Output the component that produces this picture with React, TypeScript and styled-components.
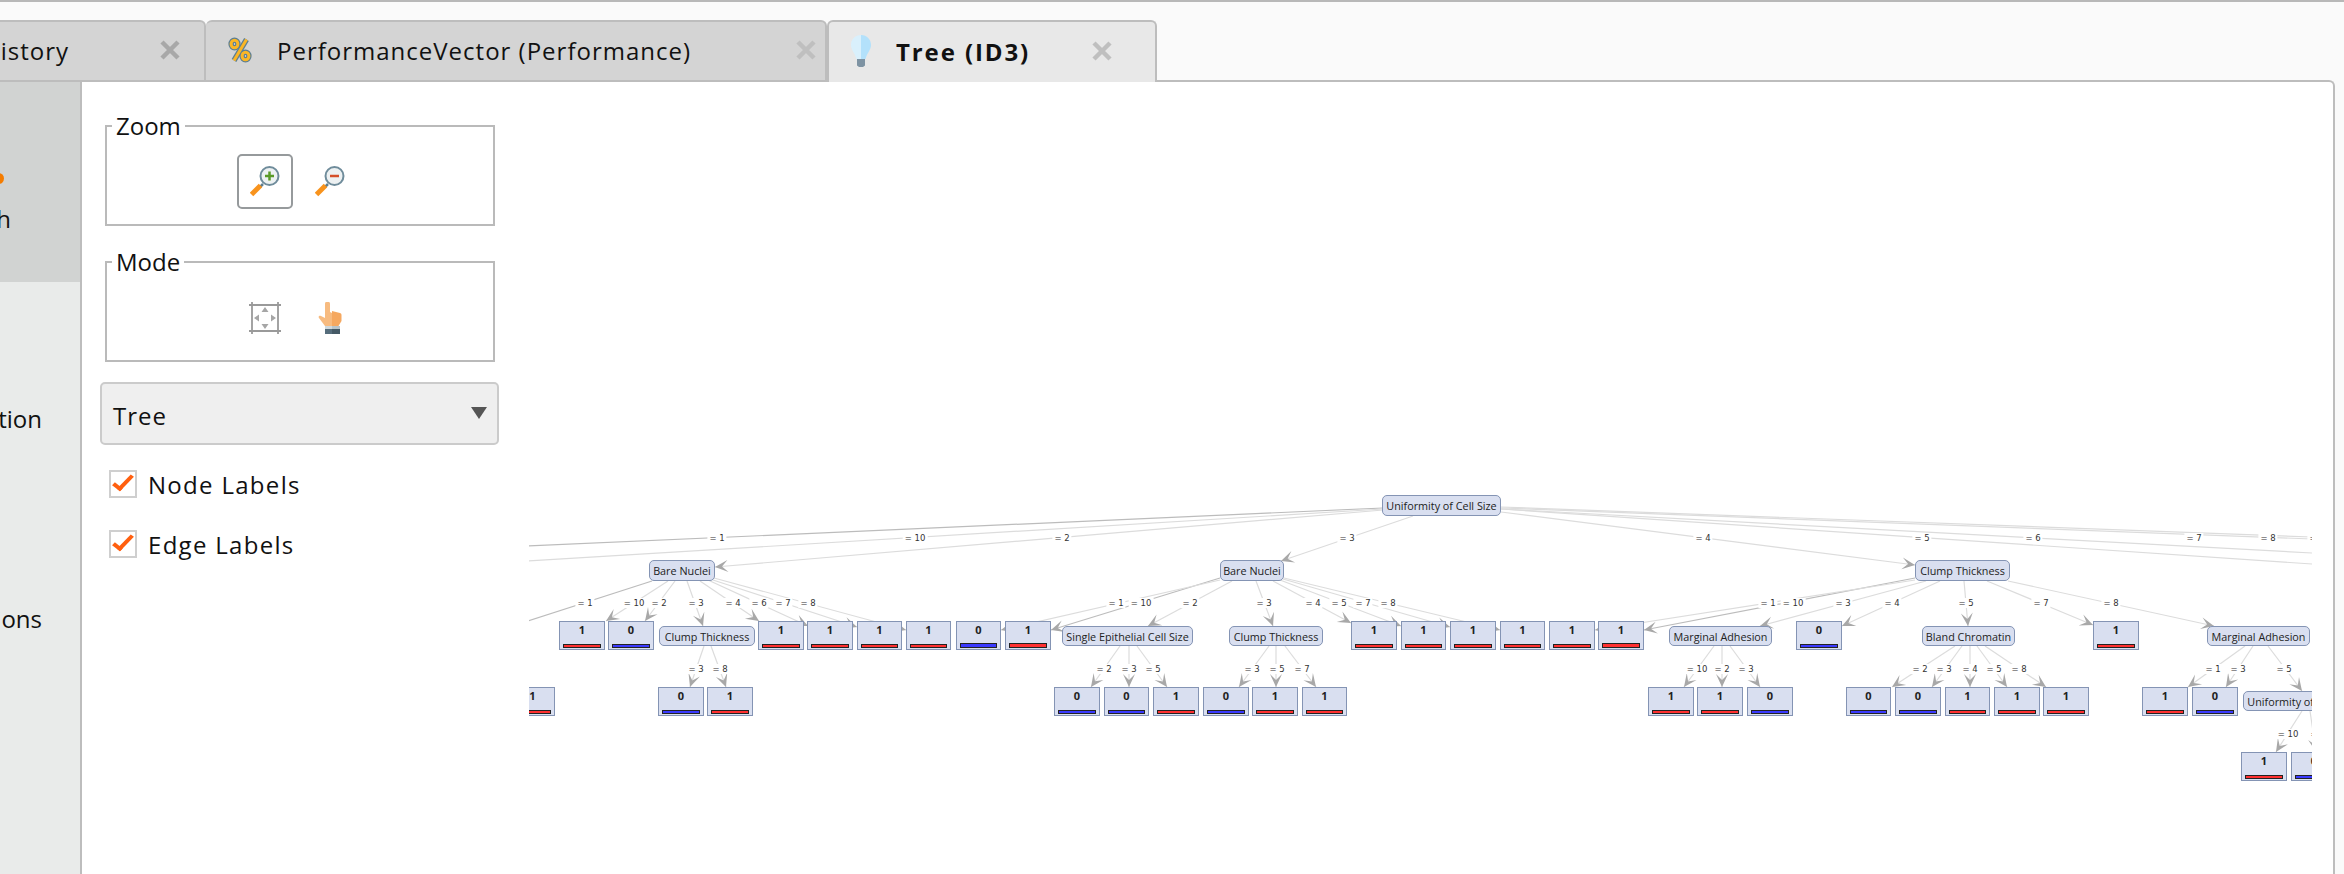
import styled, { createGlobalStyle } from "styled-components";

const GlobalStyle = createGlobalStyle`
  html, body {
    margin: 0;
    height: 100%;
    overflow: hidden;
    background: #fafafa;
    color: #111;
    font-family: "Open Sans", "Noto Sans", sans-serif;
  }
  #root { height: 100%; }
`;

// canvas origin in page coordinates
const OX = 529;
const OY = 82;

type Inner = { text: string; x0: number; x1: number; y0: number; y1: number };
type Leaf = { v: 0 | 1; x0: number; x1: number; y0: number; thick?: boolean };
type Edge = { x1: number; y1: number; x2: number; y2: number; dark?: boolean; noHead?: boolean };
type Label = { t: string; x: number; y: number };

const inners: Inner[] = [
  { text: "Uniformity of Cell Size", x0: 1382, x1: 1501, y0: 495, y1: 516 },
  { text: "Bare Nuclei", x0: 649, x1: 715, y0: 560, y1: 581 },
  { text: "Bare Nuclei", x0: 1220, x1: 1284, y0: 560, y1: 581 },
  { text: "Clump Thickness", x0: 1915, x1: 2010, y0: 560, y1: 581 },
  { text: "Clump Thickness", x0: 659, x1: 755, y0: 626, y1: 646 },
  { text: "Single Epithelial Cell Size", x0: 1062, x1: 1193, y0: 626, y1: 646 },
  { text: "Clump Thickness", x0: 1229, x1: 1323, y0: 626, y1: 646 },
  { text: "Marginal Adhesion", x0: 1669, x1: 1772, y0: 626, y1: 646 },
  { text: "Bland Chromatin", x0: 1922, x1: 2015, y0: 626, y1: 646 },
  { text: "Marginal Adhesion", x0: 2207, x1: 2310, y0: 626, y1: 646 },
  { text: "Uniformity of Cell Size", x0: 2243, x1: 2362, y0: 691, y1: 711 },
];

const L2 = 621;
const L3 = 687;
const L4 = 752;

const leaves: Leaf[] = [
  { v: 1, x0: 559, x1: 605, y0: L2 },
  { v: 0, x0: 608, x1: 654, y0: L2 },
  { v: 1, x0: 758, x1: 804, y0: L2 },
  { v: 1, x0: 807, x1: 853, y0: L2 },
  { v: 1, x0: 857, x1: 902, y0: L2 },
  { v: 1, x0: 906, x1: 951, y0: L2 },
  { v: 0, x0: 956, x1: 1001, y0: L2, thick: true },
  { v: 1, x0: 1005, x1: 1051, y0: L2, thick: true },
  { v: 1, x0: 1351, x1: 1397, y0: L2 },
  { v: 1, x0: 1401, x1: 1446, y0: L2 },
  { v: 1, x0: 1450, x1: 1496, y0: L2 },
  { v: 1, x0: 1500, x1: 1545, y0: L2 },
  { v: 1, x0: 1549, x1: 1595, y0: L2 },
  { v: 1, x0: 1598, x1: 1644, y0: L2, thick: true },
  { v: 0, x0: 1796, x1: 1842, y0: L2 },
  { v: 1, x0: 2093, x1: 2139, y0: L2 },
  { v: 1, x0: 510, x1: 555, y0: L3 },
  { v: 0, x0: 658, x1: 704, y0: L3 },
  { v: 1, x0: 707, x1: 753, y0: L3 },
  { v: 0, x0: 1054, x1: 1100, y0: L3 },
  { v: 0, x0: 1104, x1: 1149, y0: L3 },
  { v: 1, x0: 1153, x1: 1199, y0: L3 },
  { v: 0, x0: 1203, x1: 1249, y0: L3 },
  { v: 1, x0: 1252, x1: 1298, y0: L3 },
  { v: 1, x0: 1302, x1: 1347, y0: L3 },
  { v: 1, x0: 1648, x1: 1694, y0: L3 },
  { v: 1, x0: 1697, x1: 1743, y0: L3 },
  { v: 0, x0: 1747, x1: 1793, y0: L3 },
  { v: 0, x0: 1846, x1: 1891, y0: L3 },
  { v: 0, x0: 1895, x1: 1941, y0: L3 },
  { v: 1, x0: 1945, x1: 1990, y0: L3 },
  { v: 1, x0: 1994, x1: 2040, y0: L3 },
  { v: 1, x0: 2043, x1: 2089, y0: L3 },
  { v: 1, x0: 2142, x1: 2188, y0: L3 },
  { v: 0, x0: 2192, x1: 2238, y0: L3 },
  { v: 1, x0: 2241, x1: 2287, y0: L4 },
  { v: 0, x0: 2291, x1: 2337, y0: L4 },
];

const edges: Edge[] = [
  { x1: 1383, y1: 508, x2: 528, y2: 546, dark: true, noHead: true },
  { x1: 1383, y1: 509, x2: 528, y2: 561, noHead: true },
  { x1: 1383, y1: 510, x2: 715, y2: 567 },
  { x1: 1413, y1: 516, x2: 1281, y2: 561 },
  { x1: 1501, y1: 512, x2: 1915, y2: 565 },
  { x1: 1501, y1: 509, x2: 2312, y2: 564, noHead: true },
  { x1: 1501, y1: 509, x2: 2312, y2: 553, noHead: true },
  { x1: 1501, y1: 508, x2: 2312, y2: 539, noHead: true },
  { x1: 1501, y1: 507, x2: 2312, y2: 537, noHead: true },
  // first Bare Nuclei
  { x1: 652, y1: 581, x2: 528, y2: 621, dark: true, noHead: true },
  { x1: 668, y1: 581, x2: 606, y2: 621 },
  { x1: 675, y1: 581, x2: 645, y2: 621 },
  { x1: 687, y1: 581, x2: 703, y2: 626 },
  { x1: 700, y1: 581, x2: 759, y2: 621 },
  { x1: 708, y1: 580, x2: 808, y2: 626 },
  { x1: 713, y1: 580, x2: 857, y2: 627 },
  { x1: 714, y1: 578, x2: 906, y2: 630 },
  { x1: 704, y1: 646, x2: 690, y2: 687 },
  { x1: 711, y1: 646, x2: 726, y2: 687 },
  // second Bare Nuclei
  { x1: 1220, y1: 578, x2: 1051, y2: 630, dark: true },
  { x1: 1220, y1: 580, x2: 1001, y2: 630 },
  { x1: 1232, y1: 581, x2: 1148, y2: 626 },
  { x1: 1256, y1: 581, x2: 1273, y2: 626 },
  { x1: 1273, y1: 581, x2: 1351, y2: 623 },
  { x1: 1280, y1: 580, x2: 1401, y2: 626 },
  { x1: 1283, y1: 579, x2: 1450, y2: 627 },
  { x1: 1284, y1: 578, x2: 1500, y2: 630 },
  { x1: 1120, y1: 646, x2: 1091, y2: 687 },
  { x1: 1129, y1: 646, x2: 1129, y2: 687 },
  { x1: 1137, y1: 646, x2: 1167, y2: 687 },
  { x1: 1269, y1: 646, x2: 1239, y2: 687 },
  { x1: 1276, y1: 646, x2: 1276, y2: 687 },
  { x1: 1285, y1: 646, x2: 1316, y2: 687 },
  // first-level Clump Thickness
  { x1: 1915, y1: 578, x2: 1644, y2: 630, dark: true },
  { x1: 1915, y1: 580, x2: 1595, y2: 630 },
  { x1: 1926, y1: 581, x2: 1760, y2: 626 },
  { x1: 1940, y1: 581, x2: 1842, y2: 626 },
  { x1: 1964, y1: 581, x2: 1968, y2: 626 },
  { x1: 1987, y1: 581, x2: 2093, y2: 625 },
  { x1: 2008, y1: 581, x2: 2214, y2: 626 },
  { x1: 1714, y1: 646, x2: 1684, y2: 687 },
  { x1: 1722, y1: 646, x2: 1722, y2: 687 },
  { x1: 1730, y1: 646, x2: 1760, y2: 687 },
  { x1: 1955, y1: 646, x2: 1892, y2: 687 },
  { x1: 1962, y1: 646, x2: 1932, y2: 687 },
  { x1: 1970, y1: 646, x2: 1970, y2: 687 },
  { x1: 1977, y1: 646, x2: 2007, y2: 687 },
  { x1: 1985, y1: 646, x2: 2046, y2: 687 },
  { x1: 2245, y1: 646, x2: 2188, y2: 687 },
  { x1: 2253, y1: 646, x2: 2226, y2: 687 },
  { x1: 2268, y1: 646, x2: 2302, y2: 691 },
  { x1: 2302, y1: 711, x2: 2276, y2: 752 },
  { x1: 2310, y1: 711, x2: 2316, y2: 752 },
];

const row = (y: number, items: [string, number][]): Label[] =>
  items.map(([t, x]) => ({ t: `= ${t}`, x, y }));

const labels: Label[] = [
  ...row(538, [["1", 717], ["10", 915], ["2", 1062], ["3", 1347], ["4", 1703], ["5", 1922], ["6", 2033], ["7", 2194], ["8", 2268], ["9", 2317]]),
  ...row(603, [
    ["1", 585], ["10", 634], ["2", 659], ["3", 696], ["4", 733], ["6", 759], ["7", 783], ["8", 808],
    ["1", 1116], ["10", 1141], ["2", 1190], ["3", 1264], ["4", 1313], ["5", 1339], ["7", 1363], ["8", 1388],
    ["1", 1768], ["10", 1793], ["3", 1843], ["4", 1892], ["5", 1966], ["7", 2041], ["8", 2111],
  ]),
  ...row(669, [
    ["3", 696], ["8", 720], ["2", 1104], ["3", 1129], ["5", 1153], ["3", 1252], ["5", 1277], ["7", 1302],
    ["10", 1697], ["2", 1722], ["3", 1746], ["2", 1920], ["3", 1944], ["4", 1970], ["5", 1994], ["8", 2019],
    ["1", 2213], ["3", 2238], ["5", 2284],
  ]),
  ...row(734, [["10", 2288], ["2", 2318]]),
];

function arrowHead(e: Edge) {
  const a = Math.atan2(e.y2 - e.y1, e.x2 - e.x1);
  const pt = (len: number, side: number) => {
    const x = e.x2 - OX - Math.cos(a) * len - Math.sin(a) * side;
    const y = e.y2 - OY - Math.sin(a) * len + Math.cos(a) * side;
    return `${x.toFixed(1)},${y.toFixed(1)}`;
  };
  return [pt(0, 0), pt(13, 6), pt(7, 0), pt(13, -6)].join(" ");
}

function CloseIcon({ color }: { color: string }) {
  return (
    <CloseGlyph viewBox="0 0 20 20">
      <path d="M2 2 18 18M18 2 2 18" stroke={color} strokeWidth="4.5" fill="none" />
    </CloseGlyph>
  );
}

function PercentIcon() {
  return (
    <svg width="24" height="26" viewBox="0 0 24 26">
      <g fill="none" stroke="#5d7f92" strokeWidth="5.4">
        <ellipse cx="6.5" cy="7" rx="3.4" ry="3.8" />
        <ellipse cx="17.5" cy="19" rx="3.4" ry="3.8" />
        <path d="M18.5 2.5 6 23.5" />
      </g>
      <g fill="none" stroke="#fbb625" strokeWidth="3">
        <ellipse cx="6.5" cy="7" rx="3.4" ry="3.8" />
        <ellipse cx="17.5" cy="19" rx="3.4" ry="3.8" />
        <path d="M18.5 2.5 6 23.5" />
      </g>
    </svg>
  );
}

function BulbIcon() {
  return (
    <svg width="20" height="32" viewBox="0 0 20 32">
      <path d="M10 0C4 0 0 4.5 0 10c0 5 4 8 5.5 14H10z" fill="#d9f0fc" />
      <path d="M10 0c6 0 10 4.5 10 10 0 5-4 8-5.500 14H10z" fill="#b3e1fb" />
      <path d="M6 24h8v6.500L12 32H8l-2-1.500z" fill="#7e93a3" />
    </svg>
  );
}

function Magnifier({ minus }: { minus?: boolean }) {
  return (
    <svg width="30" height="32" viewBox="0 0 30 32">
      <path d="M10 21 13 18" stroke="#5f7f90" strokeWidth="2.500" />
      <path d="M1.500 28.500 10.500 19.500" stroke="#f8931d" strokeWidth="5" />
      <circle cx="19.500" cy="10" r="9" fill="#edf1f2" stroke="#6f8c9b" strokeWidth="2" />
      {minus ? (
        <path d="M15 10h9" stroke="#d5502a" strokeWidth="2.500" />
      ) : (
        <path d="M15 10h9M19.500 5.500v9" stroke="#5a9a28" strokeWidth="2.500" />
      )}
    </svg>
  );
}

function SelectionIcon() {
  return (
    <svg width="32" height="32" viewBox="0 0 32 32">
      <path d="M3 0v32M29 0v32M0 3h32M0 29h32" stroke="#9a9a9a" strokeWidth="1.800" />
      <path d="M16 5l3.500 5h-7zM16 27l3.500-5h-7zM5 16l5-3.500v7zM27 16l-5-3.500v7z" fill="#a6a6a6" />
    </svg>
  );
}

function HandIcon() {
  return (
    <svg width="24" height="32" viewBox="0 0 24 32">
      <path d="M7 2a2.500 2.500 0 0 1 5 0v8l2 1v13H7l-6-8c-1-1 0-3 2-2l4 2z" fill="#f7bb80" />
      <path d="M14 9l8 2c1.500 .5 1.500 1 1.500 3v5l-3 5H14z" fill="#f5a860" />
      <path d="M7 24h7v3H7z" fill="#cfd8dc" />
      <path d="M14 24h8v3h-8z" fill="#b8c4ca" />
      <path d="M7 27h7v5H7z" fill="#566d7c" />
      <path d="M14 27h8v5h-8z" fill="#455a66" />
    </svg>
  );
}

export default function App() {
  return (
    <Page>
      <GlobalStyle />
      <TopLine />
      <TabBar>
        <Tab $offset={-89} $width={295} $padRight={24}>
          <TabIconSlot />
          <TabTitle>History</TabTitle>
          <CloseIcon color="#a8a8a8" />
        </Tab>
        <Tab $width={621} $padRight={9}>
          <PercentIcon />
          <TabTitle>PerformanceVector (Performance)</TabTitle>
          <CloseIcon color="#bfbfbf" />
        </Tab>
        <Tab $active $width={330} $padRight={43}>
          <BulbIcon />
          <TabTitle $active>Tree (ID3)</TabTitle>
          <CloseIcon color="#bfbfbf" />
        </Tab>
      </TabBar>
      <Body>
        <Sidebar>
          <SideItem $active $textEnd={11}>
            <SideDot />
            <SideText>Graph</SideText>
          </SideItem>
          <SideItem $textEnd={42}>
            <SideText>Description</SideText>
          </SideItem>
          <SideItem $textEnd={42}>
            <SideText>Annotations</SideText>
          </SideItem>
        </Sidebar>
        <Panel>
          <Controls>
            <Group>
              <GroupLegend>Zoom</GroupLegend>
              <IconRow>
                <IconButton $selected>
                  <Magnifier />
                </IconButton>
                <IconButton>
                  <Magnifier minus />
                </IconButton>
              </IconRow>
            </Group>
            <Group>
              <GroupLegend>Mode</GroupLegend>
              <IconRow>
                <IconButton>
                  <SelectionIcon />
                </IconButton>
                <IconButton>
                  <HandIcon />
                </IconButton>
              </IconRow>
            </Group>
            <Dropdown>
              <span>Tree</span>
              <DropArrow />
            </Dropdown>
            <CheckList>
              <CheckRow>
                <CheckBox>
                  <CheckMark />
                </CheckBox>
                Node Labels
              </CheckRow>
              <CheckRow>
                <CheckBox>
                  <CheckMark />
                </CheckBox>
                Edge Labels
              </CheckRow>
            </CheckList>
          </Controls>
          <Canvas>
            <EdgeLayer>
              {edges.map((e, i) => (
                <g key={i}>
                  <line
                    x1={e.x1 - OX}
                    y1={e.y1 - OY}
                    x2={e.x2 - OX}
                    y2={e.y2 - OY}
                    stroke={e.dark ? "#bcbcbc" : "#dcdcdc"}
                    strokeWidth="1.200"
                  />
                  {!e.noHead && <polygon points={arrowHead(e)} fill="#a8a8a8" />}
                </g>
              ))}
            </EdgeLayer>
            {labels.map((l, i) => (
              <EdgeLabel key={i} style={{ left: l.x - OX, top: l.y - OY }}>
                {l.t}
              </EdgeLabel>
            ))}
            {inners.map((n, i) => (
              <InnerNode
                key={i}
                style={{ left: n.x0 - OX, top: n.y0 - OY, width: n.x1 - n.x0, height: n.y1 - n.y0 }}
              >
                {n.text}
              </InnerNode>
            ))}
            {leaves.map((n, i) => (
              <LeafNode key={i} style={{ left: n.x0 - OX, top: n.y0 - OY, width: n.x1 - n.x0 }}>
                <LeafValue>{n.v}</LeafValue>
                <LeafBar $blue={n.v === 0} $thick={n.thick} />
              </LeafNode>
            ))}
          </Canvas>
        </Panel>
      </Body>
    </Page>
  );
}

const Page = styled.div`
  height: 874px;
  width: 2344px;
  display: flex;
  flex-direction: column;
  overflow: hidden;
`;

const TopLine = styled.div`
  height: 2px;
  background: #b8b8b8;
  margin-bottom: 18px;
  flex: none;
`;

const TabBar = styled.div`
  height: 62px;
  flex: none;
  display: flex;
  width: 2335px;
`;

const Tab = styled.div<{ $active?: boolean; $offset?: number; $width: number; $padRight: number }>`
  box-sizing: border-box;
  position: relative;
  z-index: ${(p) => (p.$active ? 1 : 0)};
  height: 62px;
  flex: none;
  width: ${(p) => p.$width}px;
  margin-left: ${(p) => p.$offset ?? 0}px;
  padding: 0 ${(p) => p.$padRight}px 2px 22px;
  display: flex;
  align-items: center;
  background: ${(p) => (p.$active ? "#e8e8e8" : "#d4d4d4")};
  border: 2px solid #bdbdbd;
  border-left-width: ${(p) => (p.$active ? 2 : 0)}px;
  border-bottom-width: ${(p) => (p.$active ? 0 : 2)}px;
  border-radius: 6px 6px 0 0;
`;

const TabIconSlot = styled.span`
  width: 24px;
  flex: none;
`;

const TabTitle = styled.span<{ $active?: boolean }>`
  margin-left: 25px;
  margin-right: auto;
  font-size: 24px;
  font-weight: ${(p) => (p.$active ? 700 : 400)};
  letter-spacing: ${(p) => (p.$active ? 1.9 : 1)}px;
  white-space: nowrap;
`;

const CloseGlyph = styled.svg`
  width: 20px;
  height: 20px;
  flex: none;
`;

const Body = styled.div`
  flex: 1;
  display: flex;
  width: 2335px;
  min-height: 0;
  margin-top: -2px;
`;

const Sidebar = styled.div`
  width: 82px;
  flex: none;
  box-sizing: border-box;
  background: #e9ebea;
  border-top: 2px solid #bdbdbd;
  border-right: 2px solid #bdbdbd;
  overflow: hidden;
`;

const SideItem = styled.div<{ $active?: boolean; $textEnd: number }>`
  height: 200px;
  width: 80px;
  box-sizing: border-box;
  padding: 0 ${(p) => 80 - p.$textEnd}px 47px 0;
  background: ${(p) => (p.$active ? "#d1d3d2" : "transparent")};
  display: flex;
  flex-direction: column;
  justify-content: flex-end;
  align-items: flex-end;
  position: relative;
`;

const SideDot = styled.span`
  position: absolute;
  left: -7px;
  top: 91px;
  width: 11px;
  height: 11px;
  border-radius: 50%;
  background: #f57c00;
`;

const SideText = styled.span`
  font-size: 24px;
  line-height: 32px;
  white-space: nowrap;
`;

const Panel = styled.div`
  flex: 1;
  min-width: 0;
  display: flex;
  background: #fff;
  border-top: 2px solid #bdbdbd;
  border-right: 2px solid #bdbdbd;
  border-top-right-radius: 6px;
`;

const Controls = styled.div`
  width: 447px;
  flex: none;
  box-sizing: border-box;
  padding: 32px 0 0 18px;
  display: flex;
  flex-direction: column;
  align-items: flex-start;
`;

const Group = styled.fieldset`
  box-sizing: border-box;
  width: 390px;
  height: 112px;
  margin: 0 0 24px 5px;
  padding: 0 4px 0 0;
  border: 2px solid #bababa;
  display: flex;
  justify-content: center;
  align-items: center;
`;

const GroupLegend = styled.legend`
  margin-left: 5px;
  padding: 0 4px;
  font-size: 24px;
  line-height: 24px;
`;

const IconRow = styled.div`
  display: flex;
  gap: 9px;
  margin: 16px 0 0 -1px;
`;

const IconButton = styled.div<{ $selected?: boolean }>`
  box-sizing: border-box;
  width: 56px;
  height: 55px;
  display: flex;
  align-items: center;
  justify-content: center;
  border: 2px solid ${(p) => (p.$selected ? "#969a9c" : "transparent")};
  border-radius: 5px;
`;

const Dropdown = styled.div`
  box-sizing: border-box;
  width: 399px;
  height: 63px;
  margin-top: -4px;
  padding: 4px 10px 0 11px;
  display: flex;
  align-items: center;
  justify-content: space-between;
  background: #efefef;
  border: 2px solid #cbcbcb;
  border-radius: 5px;
  font-size: 24px;
  letter-spacing: 1px;
`;

const DropArrow = styled.span`
  width: 0;
  height: 0;
  margin-top: -6px;
  border-left: 8px solid transparent;
  border-right: 8px solid transparent;
  border-top: 12px solid #555;
`;

const CheckList = styled.div`
  margin: 25px 0 0 9px;
  display: flex;
  flex-direction: column;
  gap: 32px;
`;

const CheckRow = styled.div`
  height: 28px;
  display: flex;
  align-items: center;
  gap: 11px;
  font-size: 24px;
  letter-spacing: 1.300px;
`;

const CheckBox = styled.span`
  box-sizing: border-box;
  width: 28px;
  height: 28px;
  display: flex;
  align-items: center;
  justify-content: center;
  background: #fff;
  border: 2px solid #cfcfcf;
`;

const CheckMark = styled.span`
  width: 10px;
  height: 20px;
  margin: -6px 0 0 0;
  box-sizing: border-box;
  border-right: 4.500px solid #ff5f0f;
  border-bottom: 4.500px solid #ff5f0f;
  transform: rotate(38deg) skewX(-6deg);
`;

const Canvas = styled.div`
  width: 1783px;
  flex: none;
  position: relative;
  overflow: hidden;
`;

const EdgeLayer = styled.svg`
  position: absolute;
  left: 0;
  top: 0;
  width: 1783px;
  height: 792px;
`;

const EdgeLabel = styled.div`
  position: absolute;
  transform: translate(-50%, -50%);
  background: #fff;
  padding: 0 2px;
  font-family: "DejaVu Sans", sans-serif;
  font-size: 8.500px;
  line-height: 10px;
  color: #333;
  white-space: nowrap;
`;

const InnerNode = styled.div`
  position: absolute;
  box-sizing: border-box;
  display: flex;
  align-items: center;
  justify-content: center;
  background: #d9dff0;
  border: 1px solid #8494b4;
  border-radius: 5px;
  font-size: 10.800px;
  color: #222;
  white-space: nowrap;
`;

const LeafNode = styled.div`
  position: absolute;
  box-sizing: border-box;
  height: 29px;
  padding: 0 3px 1px;
  display: flex;
  flex-direction: column;
  justify-content: space-between;
  background: #d9dff0;
  border: 1px solid #8494b4;
`;

const LeafValue = styled.span`
  text-align: center;
  font-size: 11px;
  line-height: 15px;
  font-weight: 700;
  color: #222;
`;

const LeafBar = styled.span<{ $blue?: boolean; $thick?: boolean }>`
  display: block;
  height: ${(p) => (p.$thick ? 5 : 4)}px;
  box-sizing: border-box;
  background: ${(p) => (p.$blue ? "#3a3aff" : "#ff3030")};
  border: 1px solid #222;
`;
